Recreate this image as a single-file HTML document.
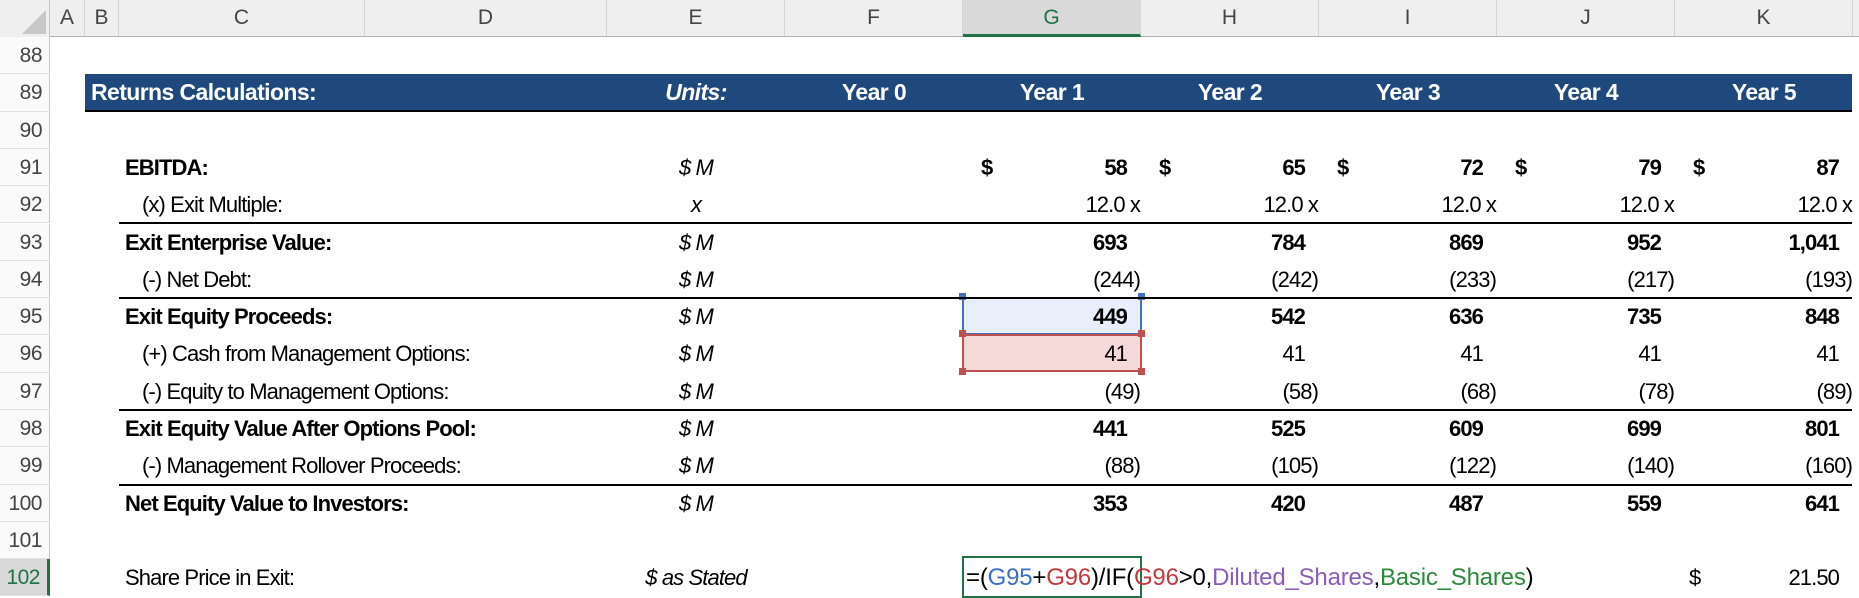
<!DOCTYPE html>
<html><head><meta charset="utf-8">
<style>
*{margin:0;padding:0;box-sizing:border-box}
body{width:1859px;height:597px;overflow:hidden;background:#fff;position:relative;font-family:"Liberation Sans",Arial,sans-serif;font-size:22px;color:#000;letter-spacing:-0.9px}
.a{position:absolute;white-space:nowrap}
.hdr{position:absolute;top:0;left:0;width:1859px;height:37px;background:#efefef;border-bottom:1px solid #b0b0b0}
.ch{position:absolute;top:0;height:36px;line-height:36px;text-align:center;color:#444;font-size:21px;letter-spacing:0;border-right:1px solid #d4d4d4}
.rn{position:absolute;left:0;width:50px;height:37.3px;line-height:37.3px;text-align:right;padding-right:7px;color:#444;font-size:21px;letter-spacing:-0.5px;background:#fafafa;border-right:1px solid #c8c8c8;border-bottom:1px solid #e2e2e2}
.c{position:absolute;height:37.3px;line-height:37.3px;white-space:nowrap}
.r{text-align:right}
.b{font-weight:bold}
.i{font-style:italic}
.ln{position:absolute;left:119px;width:1733px;height:2px;background:#000}
.w{color:#fff;font-size:23px;letter-spacing:-0.6px}
</style></head><body>
<div class="hdr"></div>
<div class="a" style="left:0;top:0;width:50px;height:37px;background:#efefef;border-right:1px solid #c8c8c8"></div>
<svg class="a" style="left:22px;top:10px" width="24" height="24"><polygon points="24,0 24,24 0,24" fill="#c8c8c8"/></svg>
<div class="ch" style="left:50px;width:35px">A</div>
<div class="ch" style="left:85px;width:34px">B</div>
<div class="ch" style="left:119px;width:246px">C</div>
<div class="ch" style="left:365px;width:242px">D</div>
<div class="ch" style="left:607px;width:178px">E</div>
<div class="ch" style="left:785px;width:178px">F</div>
<div class="ch" style="left:963px;width:178px;background:#d9d9d9;color:#217346;border-bottom:3px solid #217346;height:37px">G</div>
<div class="ch" style="left:1141px;width:178px">H</div>
<div class="ch" style="left:1319px;width:178px">I</div>
<div class="ch" style="left:1497px;width:178px">J</div>
<div class="ch" style="left:1675px;width:178px">K</div>

<div class="rn" style="top:37px">88</div>
<div class="rn" style="top:74.3px">89</div>
<div class="rn" style="top:111.6px">90</div>
<div class="rn" style="top:148.9px">91</div>
<div class="rn" style="top:186.2px">92</div>
<div class="rn" style="top:223.5px">93</div>
<div class="rn" style="top:260.8px">94</div>
<div class="rn" style="top:298.1px">95</div>
<div class="rn" style="top:335.4px">96</div>
<div class="rn" style="top:372.7px">97</div>
<div class="rn" style="top:410px">98</div>
<div class="rn" style="top:447.3px">99</div>
<div class="rn" style="top:484.6px">100</div>
<div class="rn" style="top:521.9px">101</div>
<div class="rn" style="top:559.2px;background:#d9d9d9;color:#217346;border-right:3px solid #217346">102</div>

<div class="a" style="left:85px;top:74.3px;width:1767px;height:37.3px;background:#1f497d;border-bottom:2px solid #000"></div>
<div class="c b w" style="left:91px;top:74.3px">Returns Calculations:</div>
<div class="c b i w" style="left:607px;width:178px;top:74.3px;text-align:center">Units:</div>
<div class="c b w" style="left:785px;width:178px;top:74.3px;text-align:center">Year 0</div>
<div class="c b w" style="left:963px;width:178px;top:74.3px;text-align:center">Year 1</div>
<div class="c b w" style="left:1141px;width:178px;top:74.3px;text-align:center">Year 2</div>
<div class="c b w" style="left:1319px;width:178px;top:74.3px;text-align:center">Year 3</div>
<div class="c b w" style="left:1497px;width:178px;top:74.3px;text-align:center">Year 4</div>
<div class="c b w" style="left:1675px;width:178px;top:74.3px;text-align:center">Year 5</div>

<div class="a" style="left:962px;top:297px;width:180px;height:38px;background:#e8eefa;border:2px solid #4472c4"></div>
<div class="a" style="left:962px;top:334px;width:180px;height:38px;background:#f6d9d9;border:2px solid #c0504d"></div>
<div class="a" style="left:959px;top:293px;width:7px;height:7px;background:#4472c4"></div>
<div class="a" style="left:1138px;top:293px;width:7px;height:7px;background:#4472c4"></div>
<div class="a" style="left:959px;top:330px;width:7px;height:7px;background:#c0504d"></div>
<div class="a" style="left:1138px;top:330px;width:7px;height:7px;background:#c0504d"></div>
<div class="a" style="left:959px;top:368px;width:7px;height:7px;background:#c0504d"></div>
<div class="a" style="left:1138px;top:368px;width:7px;height:7px;background:#c0504d"></div>
<div class="a" style="left:962px;top:556px;width:180px;height:42px;border:2px solid #217346"></div>

<div class="ln" style="top:222px"></div>
<div class="ln" style="top:297px"></div>
<div class="ln" style="top:409px"></div>
<div class="ln" style="top:484px"></div>

<div class="c b" style="left:125px;top:148.9px">EBITDA:</div>
<div class="c" style="left:142px;top:186.2px">(x) Exit Multiple:</div>
<div class="c b" style="left:125px;top:223.5px">Exit Enterprise Value:</div>
<div class="c" style="left:142px;top:260.8px">(-) Net Debt:</div>
<div class="c b" style="left:125px;top:298.1px">Exit Equity Proceeds:</div>
<div class="c" style="left:142px;top:335.4px">(+) Cash from Management Options:</div>
<div class="c" style="left:142px;top:372.7px">(-) Equity to Management Options:</div>
<div class="c b" style="left:125px;top:410px">Exit Equity Value After Options Pool:</div>
<div class="c" style="left:142px;top:447.3px">(-) Management Rollover Proceeds:</div>
<div class="c b" style="left:125px;top:484.6px">Net Equity Value to Investors:</div>
<div class="c" style="left:125px;top:559.2px">Share Price in Exit:</div>

<div class="c i" style="left:607px;width:178px;text-align:center;top:148.9px">$ M</div>
<div class="c i" style="left:607px;width:178px;text-align:center;top:186.2px">x</div>
<div class="c i" style="left:607px;width:178px;text-align:center;top:223.5px">$ M</div>
<div class="c i" style="left:607px;width:178px;text-align:center;top:260.8px">$ M</div>
<div class="c i" style="left:607px;width:178px;text-align:center;top:298.1px">$ M</div>
<div class="c i" style="left:607px;width:178px;text-align:center;top:335.4px">$ M</div>
<div class="c i" style="left:607px;width:178px;text-align:center;top:372.7px">$ M</div>
<div class="c i" style="left:607px;width:178px;text-align:center;top:410px">$ M</div>
<div class="c i" style="left:607px;width:178px;text-align:center;top:447.3px">$ M</div>
<div class="c i" style="left:607px;width:178px;text-align:center;top:484.6px">$ M</div>
<div class="c i" style="left:607px;width:178px;text-align:center;top:559.2px">$ as Stated</div>

<div class="c b" style="left:981px;top:148.9px">$</div>
<div class="c b" style="left:1159px;top:148.9px">$</div>
<div class="c b" style="left:1337px;top:148.9px">$</div>
<div class="c b" style="left:1515px;top:148.9px">$</div>
<div class="c b" style="left:1693px;top:148.9px">$</div>

<div style="position:absolute;left:963px;top:0">
<div class="c b r" style="left:0;width:164px;top:148.9px">58</div>
<div class="c r" style="left:0;width:177px;top:186.2px">12.0 x</div>
<div class="c b r" style="left:0;width:164px;top:223.5px">693</div>
<div class="c r" style="left:0;width:177px;top:260.8px">(244)</div>
<div class="c b r" style="left:0;width:164px;top:298.1px">449</div>
<div class="c r" style="left:0;width:164px;top:335.4px">41</div>
<div class="c r" style="left:0;width:177px;top:372.7px">(49)</div>
<div class="c b r" style="left:0;width:164px;top:410px">441</div>
<div class="c r" style="left:0;width:177px;top:447.3px">(88)</div>
<div class="c b r" style="left:0;width:164px;top:484.6px">353</div>
</div>
<div style="position:absolute;left:1141px;top:0">
<div class="c b r" style="left:0;width:164px;top:148.9px">65</div>
<div class="c r" style="left:0;width:177px;top:186.2px">12.0 x</div>
<div class="c b r" style="left:0;width:164px;top:223.5px">784</div>
<div class="c r" style="left:0;width:177px;top:260.8px">(242)</div>
<div class="c b r" style="left:0;width:164px;top:298.1px">542</div>
<div class="c r" style="left:0;width:164px;top:335.4px">41</div>
<div class="c r" style="left:0;width:177px;top:372.7px">(58)</div>
<div class="c b r" style="left:0;width:164px;top:410px">525</div>
<div class="c r" style="left:0;width:177px;top:447.3px">(105)</div>
<div class="c b r" style="left:0;width:164px;top:484.6px">420</div>
</div>
<div style="position:absolute;left:1319px;top:0">
<div class="c b r" style="left:0;width:164px;top:148.9px">72</div>
<div class="c r" style="left:0;width:177px;top:186.2px">12.0 x</div>
<div class="c b r" style="left:0;width:164px;top:223.5px">869</div>
<div class="c r" style="left:0;width:177px;top:260.8px">(233)</div>
<div class="c b r" style="left:0;width:164px;top:298.1px">636</div>
<div class="c r" style="left:0;width:164px;top:335.4px">41</div>
<div class="c r" style="left:0;width:177px;top:372.7px">(68)</div>
<div class="c b r" style="left:0;width:164px;top:410px">609</div>
<div class="c r" style="left:0;width:177px;top:447.3px">(122)</div>
<div class="c b r" style="left:0;width:164px;top:484.6px">487</div>
</div>
<div style="position:absolute;left:1497px;top:0">
<div class="c b r" style="left:0;width:164px;top:148.9px">79</div>
<div class="c r" style="left:0;width:177px;top:186.2px">12.0 x</div>
<div class="c b r" style="left:0;width:164px;top:223.5px">952</div>
<div class="c r" style="left:0;width:177px;top:260.8px">(217)</div>
<div class="c b r" style="left:0;width:164px;top:298.1px">735</div>
<div class="c r" style="left:0;width:164px;top:335.4px">41</div>
<div class="c r" style="left:0;width:177px;top:372.7px">(78)</div>
<div class="c b r" style="left:0;width:164px;top:410px">699</div>
<div class="c r" style="left:0;width:177px;top:447.3px">(140)</div>
<div class="c b r" style="left:0;width:164px;top:484.6px">559</div>
</div>
<div style="position:absolute;left:1675px;top:0">
<div class="c b r" style="left:0;width:164px;top:148.9px">87</div>
<div class="c r" style="left:0;width:177px;top:186.2px">12.0 x</div>
<div class="c b r" style="left:0;width:164px;top:223.5px">1,041</div>
<div class="c r" style="left:0;width:177px;top:260.8px">(193)</div>
<div class="c b r" style="left:0;width:164px;top:298.1px">848</div>
<div class="c r" style="left:0;width:164px;top:335.4px">41</div>
<div class="c r" style="left:0;width:177px;top:372.7px">(89)</div>
<div class="c b r" style="left:0;width:164px;top:410px">801</div>
<div class="c r" style="left:0;width:177px;top:447.3px">(160)</div>
<div class="c b r" style="left:0;width:164px;top:484.6px">641</div>
<div class="c" style="left:14px;top:559.2px">$</div>
<div class="c r" style="left:0;width:164px;top:559.2px">21.50</div>
</div>

<div class="c" style="left:966px;top:559.2px;font-size:24px;letter-spacing:-0.2px">=(<span style="color:#3c6fc2">G95</span>+<span style="color:#c0393b">G96</span>)/IF(<span style="color:#c0393b">G96</span>&gt;0,<span style="color:#8a5cb8">Diluted_Shares</span>,<span style="color:#2a8a3a">Basic_Shares</span>)</div>
</body></html>
